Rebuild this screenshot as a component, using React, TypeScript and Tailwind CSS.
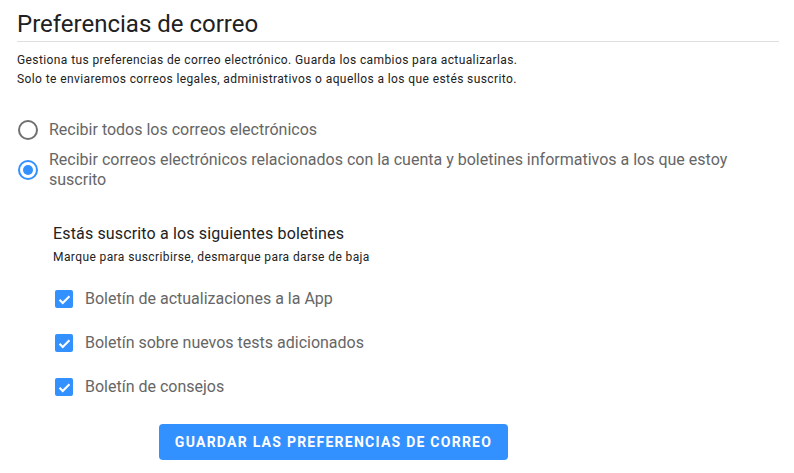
import React, { useState } from 'react';

const newsletters = [
  'Boletín de actualizaciones a la App',
  'Boletín sobre nuevos tests adicionados',
  'Boletín de consejos',
];

const Radio: React.FC<{ checked: boolean }> = ({ checked }) => (
  <span
    className={`flex h-[20px] w-[20px] shrink-0 items-center justify-center rounded-full border-2 ${
      checked ? 'border-[#3390ff]' : 'border-[#707070]'
    }`}
  >
    {checked && <span className="h-[10px] w-[10px] rounded-full bg-[#3390ff]" />}
  </span>
);

const Checkbox: React.FC<{ checked: boolean }> = ({ checked }) => (
  <span
    className={`flex h-[18px] w-[18px] shrink-0 items-center justify-center rounded-[2px] ${
      checked ? 'bg-[#3390ff]' : 'border-2 border-[#707070]'
    }`}
  >
    {checked && (
      <svg viewBox="0 0 24 24" className="h-[17px] w-[17px]" fill="none" stroke="white" strokeWidth="3">
        <path d="M5 12.5l4.5 4.5L19 7.5" />
      </svg>
    )}
  </span>
);

const App: React.FC = () => {
  const [mode, setMode] = useState(1);
  const [subs, setSubs] = useState([true, true, true]);

  return (
    <div className="min-h-screen bg-white pl-[17px] pr-[15px] font-['Roboto',sans-serif]">
      <h1 className="border-b border-[#e0e0e0] pb-[3px] pt-[10px] text-[24px] leading-[28px] text-[#212121]">
        Preferencias de correo
      </h1>

      <div className="mt-[9px] text-[12px] leading-[19px] tracking-[0.4px] text-[#212121]">
        <p>Gestiona tus preferencias de correo electrónico. Guarda los cambios para actualizarlas.</p>
        <p>Solo te enviaremos correos legales, administrativos o aquellos a los que estés suscrito.</p>
      </div>

      <div className="mt-[31px] flex flex-col gap-[10px] pl-[1px]">
        {[
          'Recibir todos los correos electrónicos',
          'Recibir correos electrónicos relacionados con la cuenta y boletines informativos a los que estoy suscrito',
        ].map((label, i) => (
          <label key={i} className="flex cursor-pointer items-center gap-[11px]" onClick={() => setMode(i)}>
            <Radio checked={mode === i} />
            <span className="max-w-[690px] text-[16px] leading-[20px] text-[#666666]">{label}</span>
          </label>
        ))}
      </div>

      <div className="mt-[34px] pl-[36px]">
        <h2 className="text-[16px] leading-[20px] tracking-[0.15px] text-[#222222]">
          Estás suscrito a los siguientes boletines
        </h2>
        <p className="mt-[5px] text-[12px] leading-[16px] tracking-[0.4px] text-[#222222]">
          Marque para suscribirse, desmarque para darse de baja
        </p>

        <div className="mt-[12px] flex flex-col">
          {newsletters.map((label, i) => (
            <label
              key={label}
              className="flex h-[44px] cursor-pointer items-center gap-[12px] pl-[2px]"
              onClick={() => setSubs(subs.map((s, j) => (j === i ? !s : s)))}
            >
              <Checkbox checked={subs[i]} />
              <span className="text-[16px] leading-[20px] text-[#666666]">{label}</span>
            </label>
          ))}
        </div>

        <button className="ml-[106px] mt-[15px] h-[36px] w-[349px] rounded-[4px] bg-[#3390ff] text-[14px] font-bold uppercase tracking-[1.25px] text-white">
          Guardar las preferencias de correo
        </button>
      </div>
    </div>
  );
};

export default App;
